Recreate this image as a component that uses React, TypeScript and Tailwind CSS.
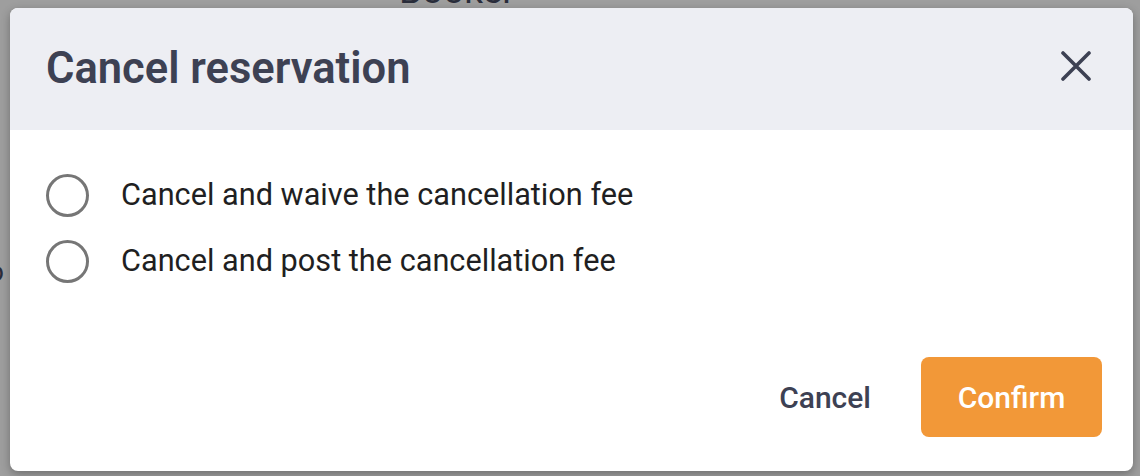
import { useState } from "react";

const options = [
	{ id: "waive", label: "Cancel and waive the cancellation fee" },
	{ id: "post", label: "Cancel and post the cancellation fee" },
];

function CloseIcon() {
	return (
		<svg width="30" height="30" viewBox="0 0 30 30" fill="none">
			<path
				d="M2 2L28 28M28 2L2 28"
				stroke="#3d4153"
				strokeWidth="3.6"
				strokeLinecap="round"
			/>
		</svg>
	);
}

export default function App() {
	const [selected, setSelected] = useState<string | null>(null);

	return (
		<div className="relative w-[1140px] h-[476px] overflow-hidden bg-[#9e9e9e] font-['Roboto',sans-serif]">
			{/* page content peeking out behind the overlay */}
			<span className="absolute left-[399px] top-[-28px] text-[37px] leading-none text-[#2a2d3b]">
				Booker
			</span>
			<span className="absolute left-[-12px] top-[258px] text-[28px] leading-none text-[#2a2d3b]">
				o
			</span>

			<div className="absolute left-[10px] top-[8px] flex h-[463px] w-[1123px] flex-col overflow-hidden rounded-[8px] bg-white shadow-[0_3px_10px_rgba(0,0,0,0.3)]">
				<header className="flex h-[122px] items-center justify-between bg-[#edeef3] pl-[36px] pr-[42px]">
					<h2 className="text-[43.5px] font-semibold leading-none text-[#3d4153]">
						Cancel reservation
					</h2>
					<button type="button" className="mt-[-6px]">
						<CloseIcon />
					</button>
				</header>

				<section className="flex flex-col gap-[23px] pl-[36px] pt-[44px]">
					{options.map((opt) => (
						<label
							key={opt.id}
							className="flex cursor-pointer items-center gap-[32px]"
							onClick={() => setSelected(opt.id)}
						>
							<span className="flex h-[43px] w-[43px] items-center justify-center rounded-full border-[3px] border-[#767676]">
								{selected === opt.id && (
									<span className="h-[21px] w-[21px] rounded-full bg-[#f29838]" />
								)}
							</span>
							<span className="text-[30.7px] leading-none text-[#1f1f22]">
								{opt.label}
							</span>
						</label>
					))}
				</section>

				<footer className="mt-auto flex items-center justify-end gap-[14px] pb-[34px] pr-[31px]">
					<button
						type="button"
						className="h-[80px] px-[36px] text-[30px] font-medium text-[#3d4153]"
					>
						Cancel
					</button>
					<button
						type="button"
						className="h-[80px] w-[181px] rounded-[8px] bg-[#f29838] text-[30px] font-medium text-white"
					>
						Confirm
					</button>
				</footer>
			</div>
		</div>
	);
}
